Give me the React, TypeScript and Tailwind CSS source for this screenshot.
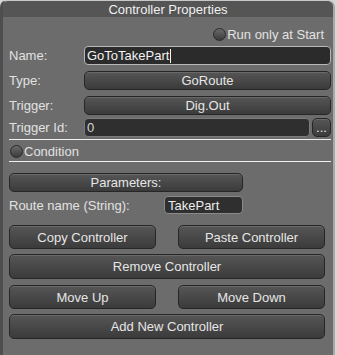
import React from "react";

const font = { fontFamily: '"Liberation Sans", Arial, sans-serif' };

function Btn({ children, className = "" }: { children: React.ReactNode; className?: string }) {
  return (
    <div
      className={
        "flex items-center justify-center rounded-[5px] border border-[#262626] bg-gradient-to-b from-[#565656] to-[#3b3b3b] text-[13px] leading-none text-[#e6e6e6] shadow-[inset_0_1px_0_rgba(255,255,255,0.12)] " +
        className
      }
    >
      {children}
    </div>
  );
}

function Radio() {
  return (
    <div className="h-[13px] w-[13px] shrink-0 rounded-full border border-[#2a2a2a] bg-gradient-to-b from-[#6a6a6a] to-[#3c3c3c]" />
  );
}

export default function App() {
  return (
    <div className="h-[355px] w-[337px] bg-[#d6d6d6]" style={font}>
      <div className="flex h-[355px] w-[335px] flex-col rounded-t-[7px] border-l-[3px] border-r-[2px] border-t border-[#4e4e4e] border-r-[#a8a8a8] border-t-[#c8c8c8] bg-[#6c6c6c]">
        <div className="flex h-[16px] items-center justify-center rounded-t-[6px] bg-[#555555] text-[13px] leading-none text-[#f0f0f0]">
          Controller Properties
        </div>
        <div className="flex flex-col pl-[6px] pr-[2px] text-[13px] leading-none text-[#e2e2e2]">
          <div className="mt-[10px] flex h-[14px] items-center justify-end pr-[7px]">
            <Radio />
            <span className="ml-[1px]">Run only at Start</span>
          </div>
          <div className="mt-[5px] flex h-[19px] items-center">
            <span className="w-[75px]">Name:</span>
            <div className="flex h-[19px] flex-1 items-center rounded-[4px] border border-[#b8b8b8] bg-[#2b2b2b] pl-[2px] text-[#f2f2f2]">
              GoToTakePart<span className="ml-[1px] h-[14px] w-[1px] bg-[#f2f2f2]" />
            </div>
          </div>
          <div className="mt-[6px] flex h-[19px] items-center">
            <span className="w-[75px]">Type:</span>
            <Btn className="h-[19px] flex-1">GoRoute</Btn>
          </div>
          <div className="mt-[6px] flex h-[19px] items-center">
            <span className="w-[75px]">Trigger:</span>
            <Btn className="h-[19px] flex-1">Dig.Out</Btn>
          </div>
          <div className="mt-[3px] flex h-[19px] items-center">
            <span className="w-[75px]">Trigger Id:</span>
            <div className="flex h-[19px] flex-1 items-center rounded-[4px] border border-[#7c7c7c] bg-[#2f2f2f] pl-[2px] text-[#d8d8d8]">
              0
            </div>
            <Btn className="ml-[2px] h-[19px] w-[19px] text-[9px] text-[#cfcfcf]">...</Btn>
          </div>
          <div className="mt-[2px] h-[1px] bg-[#f0f0f0]" />
          <div className="mt-[4px] flex h-[14px] items-center pl-[1px]">
            <Radio />
            <span className="ml-[1px]">Condition</span>
          </div>
          <div className="mt-[3px] h-[1px] bg-[#f0f0f0]" />
          <Btn className="mt-[11px] h-[19px] w-[234px]">Parameters:</Btn>
          <div className="mt-[4px] flex h-[18px] items-center">
            <span className="w-[155px]">Route name (String):</span>
            <div className="flex h-[18px] w-[79px] items-center rounded-[4px] border border-[#8a8a8a] bg-[#2f2f2f] pl-[3px] text-[#ececec]">
              TakePart
            </div>
          </div>
          <div className="mt-[11px] flex w-[316px] justify-between">
            <Btn className="h-[24px] w-[147px]">Copy Controller</Btn>
            <Btn className="h-[24px] w-[147px]">Paste Controller</Btn>
          </div>
          <Btn className="mt-[5px] h-[25px] w-[316px]">Remove Controller</Btn>
          <div className="mt-[6px] flex w-[316px] justify-between">
            <Btn className="h-[24px] w-[147px]">Move Up</Btn>
            <Btn className="h-[24px] w-[147px]">Move Down</Btn>
          </div>
          <Btn className="mt-[5px] h-[25px] w-[316px]">Add New Controller</Btn>
        </div>
      </div>
    </div>
  );
}
